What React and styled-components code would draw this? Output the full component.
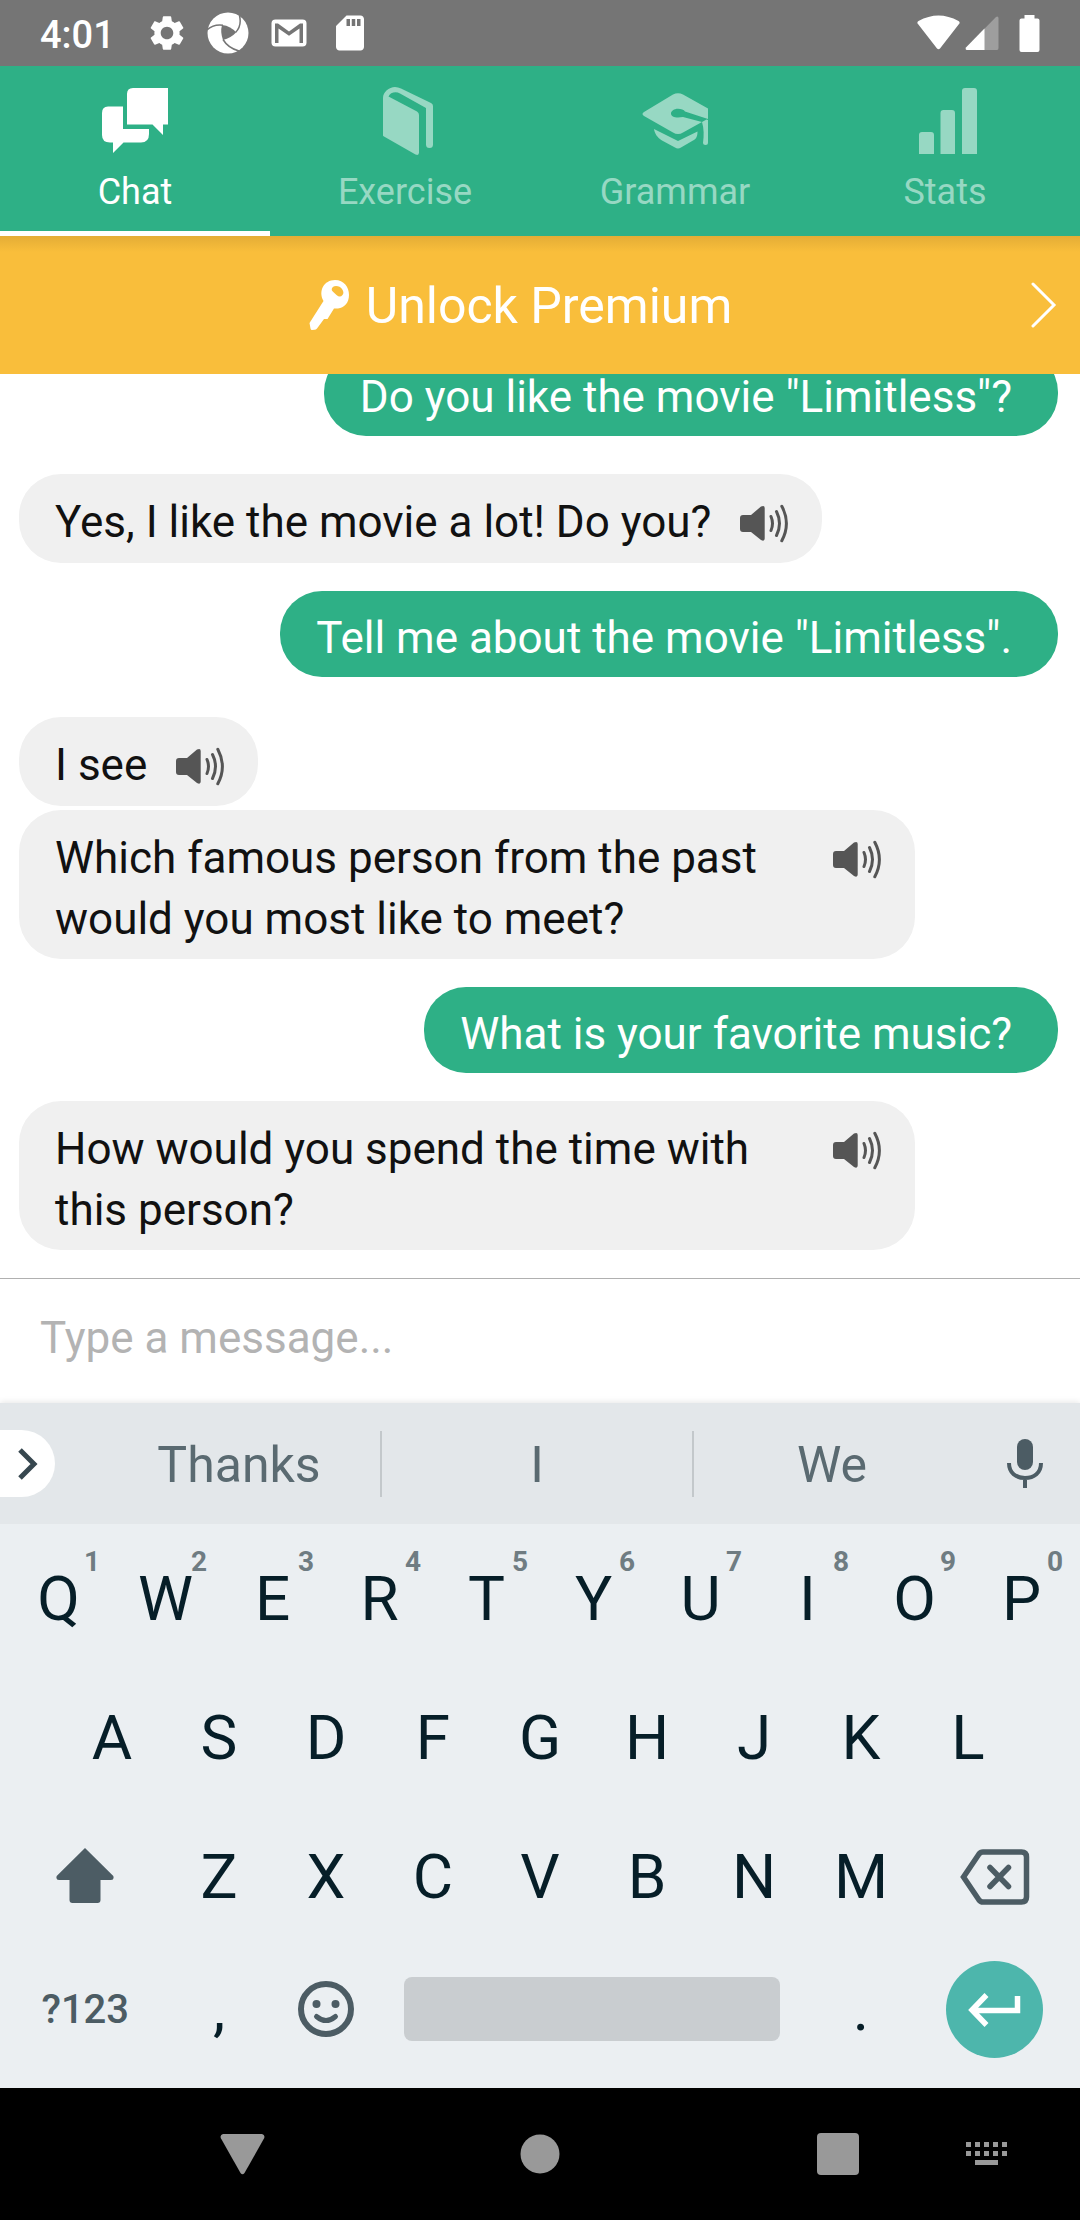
import React, { useState } from "react";
import styled, { createGlobalStyle } from "styled-components";
import { MdSettings, MdSdCard } from "react-icons/md";

const GlobalStyle = createGlobalStyle`
  * { box-sizing: border-box; }
  body { margin: 0; background: #fff; font-family: Roboto, "Noto Sans", sans-serif; }
  button, input { font: inherit; color: inherit; border: 0; background: none; padding: 0; margin: 0; }
  svg { display: block; flex: none; }
`;

const Screen = styled.div`
  display: flex;
  flex-direction: column;
  height: 100vh;
`;

const StatusBar = styled.header`
  flex: none;
  display: flex;
  align-items: center;
  justify-content: space-between;
  height: 66px;
  padding: 0 40px;
  background: #757575;
  color: #fff;
`;

const StatusGroup = styled.div`
  display: flex;
  align-items: center;
  gap: ${(p) => p.$gap}px;
`;

const Clock = styled.time`
  padding-top: 3px;
  margin-right: 12px;
  font-size: 38px;
  line-height: 48px;
  font-weight: 500;
`;

const TabBar = styled.nav`
  flex: none;
  display: grid;
  grid-template-columns: repeat(4, 1fr);
  height: 170px;
  background: #2eb086;
`;

const Tab = styled.button`
  display: flex;
  flex-direction: column;
  align-items: center;
  gap: 13px;
  padding-top: 21px;
  color: ${(p) => (p.$active ? "#fff" : "#97d8c3")};
  border-bottom: 5px solid ${(p) => (p.$active ? "#fff" : "transparent")};
  font-size: 36px;
  line-height: 44px;
`;

const Banner = styled.button`
  flex: none;
  display: flex;
  align-items: center;
  height: 138px;
  padding: 0 23px 0 10px;
  color: #fff;
  background: linear-gradient(#e4ad36, #f9be3b 16px);
`;

const BannerLabel = styled.span`
  flex: 1;
  display: flex;
  align-items: center;
  justify-content: center;
  gap: 16px;
  padding-top: 2px;
  font-size: 50px;
  line-height: 60px;
`;

const Messages = styled.main`
  flex: 1;
  min-height: 0;
  display: flex;
  flex-direction: column;
  justify-content: flex-end;
  padding: 0 22px 28px 19px;
  overflow: hidden;
`;

const Bubble = styled.div`
  flex: none;
  display: flex;
  align-items: flex-start;
  gap: 29px;
  max-width: 83vw;
  border-radius: 42px;
  font-size: 44px;
  line-height: 61px;
`;

const BotBubble = styled(Bubble)`
  align-self: flex-start;
  margin-top: ${(p) => p.$gap}px;
  padding: 18px 33px 9px 36px;
  background: #f0f0f0;
  color: #111;
`;

const UserBubble = styled(Bubble)`
  align-self: flex-end;
  margin-top: 28px;
  padding: 17px 46px 8px 36px;
  background: #2eb086;
  color: #fff;
`;

const BubbleText = styled.span`
  flex: 0 1 auto;
`;

const SpeakButton = styled.button`
  flex: none;
  margin: 12px 0 11px auto;
  color: #555;
`;

const Composer = styled.form`
  flex: none;
  display: flex;
  height: 125px;
  border-top: 1px solid #b0b0b0;
`;

const MessageInput = styled.input`
  flex: 1;
  min-width: 0;
  padding: 0 40px 6px;
  font-size: 44px;
  outline: none;
  &::placeholder { color: #b3b3b3; opacity: 1; }
`;

const Suggestions = styled.div`
  flex: none;
  display: grid;
  grid-template-columns: 98px 284fr 312fr 276fr 110px;
  align-items: center;
  height: 121px;
  background: #e3e7ea;
  color: #5a6a71;
  box-shadow: 0 -1px 6px rgba(0, 0, 0, 0.1);
`;

const ExpandButton = styled.button`
  display: flex;
  align-items: center;
  width: 55px;
  height: 67px;
  padding-left: 17px;
  border-radius: 0 34px 34px 0;
  background: #fff;
  color: #37474f;
`;

const Suggestion = styled.button`
  height: 66px;
  padding-top: 2px;
  border-right: ${(p) => (p.$last ? "0" : "2px solid #c3c8cb")};
  font-size: 50px;
  line-height: 64px;
`;

const MicButton = styled.button`
  justify-self: center;
  color: #4c5c64;
`;

const Keyboard = styled.section`
  flex: none;
  padding: 5px 5px 16px;
  background: #ebeff2;
  color: #061e28;
`;

const KeyRow = styled.div`
  display: flex;
  justify-content: center;
  height: ${(p) => p.$height}px;
`;

const Key = styled.button`
  position: relative;
  flex: 0 0 10%;
  font-size: 62px;
  line-height: 72px;
`;

const ActionKey = styled.button`
  flex: 1;
  display: flex;
  align-items: center;
  justify-content: center;
  color: #4c5c64;
  font-size: 40px;
  font-weight: 500;
`;

const EmojiKey = styled(ActionKey)`
  flex: 0 0 10%;
`;

const Hint = styled.span`
  position: absolute;
  top: 15px;
  right: 12px;
  font-size: 28px;
  line-height: 36px;
  font-weight: 700;
  color: #6f7c82;
`;

const SpaceKey = styled.button`
  flex: 0 0 40%;
  padding: 0 28px 0 24px;
  display: flex;
  align-items: center;
  &::before {
    content: "";
    flex: 1;
    height: 64px;
    border-radius: 8px;
    background: #c9cdd0;
  }
`;

const EnterDisc = styled.span`
  display: flex;
  align-items: center;
  justify-content: center;
  width: 97px;
  height: 97px;
  border-radius: 50%;
  background: #4db6ac;
`;

const NavBar = styled.footer`
  flex: none;
  display: grid;
  grid-template-columns: 94fr 297fr 298fr 74fr 149fr 149fr 19fr;
  align-items: center;
  height: 132px;
  background: #000;
  color: #999;
`;

const NavButton = styled.button`
  grid-column: ${(p) => p.$col};
  display: flex;
  justify-content: center;
`;

const ChatIcon = () => (
  <svg width="66" height="70" viewBox="0 -1 66 70" fill="currentColor">
    <path d="M31 0H66V36.500H61V47L50.500 36.500H25V6Q25 0 31 0Z" />
    <path d="M6 18.500H21V41H47V46Q47 54.500 39 54.500H21.500L11 65V54.500H8Q0 54.500 0 47V25Q0 18.500 6 18.500Z" />
  </svg>
);

const BookIcon = () => (
  <svg width="66" height="70" viewBox="0 0 66 70" fill="currentColor">
    <path d="M11 48.500V11C11 5 17 0 23 0C25 0 27 .5 29 1.500L59 16Q61 17 61 19V57.500A3.500 3.500 0 0 1 54 57.500V21L28 6.500C24 4 18 5.500 16.500 9.500L45 24.500Q47 25.500 47 28V65.500Q47 69 43.500 67.500L12 49.500Q11 49 11 48.500Z" />
  </svg>
);

const CapIcon = () => (
  <svg width="66" height="70" viewBox="0 0 66 70" fill="currentColor">
    <path d="M2 25L31 7.500Q36 5 41 7.500L66 21.500V32L43 24.500C42 22.500 39 21.700 36 21.700C32 21.700 29 24 29 26.400C29 29 32 30.500 36 30.500L41 30L60 35L41 45.500Q36 48.500 31 45.500L2 29Q-1 27 2 25Z" />
    <path d="M60 35L64.500 32.500L66 33V55.500Q66 58 63.500 58Q61 58 61 56C62 48 62 42 60 35Z" />
    <path d="M12 42L36 54L55.500 44.500C55.500 50 54 52 51 53.500L39 60.500Q36 62.500 33 60.500L20 53.500C15 50.500 12.500 46 12 42Z" />
  </svg>
);

const StatsIcon = () => (
  <svg width="66" height="70" viewBox="0 0 66 70" fill="currentColor">
    <path d="M7 67V48Q7 45 10 45H19Q22 45 22 48V67ZM28.500 67V26Q28.500 23 31.500 23H40Q43 23 43 26V67ZM50 67V4Q50 1 53 1H62Q65 1 65 4V67Z" />
  </svg>
);

const ShutterIcon = () => (
  <svg width="42" height="42" viewBox="0 0 42 42">
    <circle cx="21" cy="21" r="20.500" fill="#fff" />
    <path d="M15 13Q24 14 29 20.500Q24 26 16 28Q13 20 15 13Z" fill="#757575" />
    <path d="M0 18Q6 12 16 13.200M28.500 20.500Q35 14 32.500 3.500M16 27.500Q21 36 32 39" fill="none" stroke="#757575" strokeWidth="1.500" />
  </svg>
);

const MailIcon = () => (
  <svg width="42" height="42" viewBox="-3 -7 42 42">
    <rect x=".5" y=".5" width="35" height="27" rx="4" fill="#fff" />
    <path d="M4 24V4.500H7L18 12.500L29 4.500H32V24H28.500V9.500L18 16.800L7.500 9.500V24Z" fill="#757575" />
  </svg>
);

const WifiIcon = () => (
  <svg width="43" height="36" viewBox="0 0 43 36" fill="#fff">
    <path d="M1 9Q-.5 7.500 1.500 6Q21.500 -5 41.500 6Q43.500 7.500 42 9L23 33.500Q21.500 35 20 33.500Z" />
  </svg>
);

const SignalIcon = () => (
  <svg width="34" height="36" viewBox="0 0 34 36">
    <path d="M33.500 33V3Q33 .5 31 2L1 32.500Q0 34.500 2 35H32Q33.500 35 33.500 33Z" fill="#9e9e9e" />
    <path d="M19.500 13.500V35H2Q0 34.500 1 32.500Z" fill="#fff" />
  </svg>
);

const BatteryIcon = () => (
  <svg width="21" height="37" viewBox="0 0 21 37" fill="#fff">
    <path d="M5.500 0H15.500V3.500H18.500Q20.500 3.500 20.500 5.500V35Q20.500 37 18.500 37H2.500Q.5 37 .5 35V5.500Q.5 3.500 2.500 3.500H5.500Z" />
  </svg>
);

const KeyIcon = () => (
  <svg width="41" height="52" viewBox="0 0 41 52" fill="#fff" fillRule="evenodd">
    <path d="M.5 43L14.500 21C9 11 15 0 26 0C35 0 40 7 40 15C40 23 35 28 29 28.500H25L18.500 39H15L8 48.500Q7 49.800 5.500 49.800L3 50Q1.800 50 1.500 48.500ZM22.700 9Q23.500 6 27 6Q31 6 33 9Q35.500 12.500 33.500 15Q31 18 27.500 15L24 11.800Q22.500 10.500 22.700 9Z" />
  </svg>
);

const SpeakerIcon = () => (
  <svg width="49" height="39" viewBox="0 0 49 39" fill="none" stroke="currentColor" strokeLinecap="round">
    <path d="M3 11H11L21 2.500Q24.700 .8 24.700 4V34.500Q24.700 37.800 21 36L11 28H3Q0 28 0 25V14Q0 11 3 11Z" fill="currentColor" stroke="none" />
    <path d="M31 12.500Q34 19.500 31 26.500M36.500 7.500Q42.500 19.500 36.500 31.500M41.800 2.200Q51 19.500 41.800 36.800" strokeWidth="3" />
  </svg>
);

const LinesIcon = ({ w, h, d, stroke = 3, cap = "round" }) => (
  <svg width={w} height={h} viewBox={`0 0 ${w} ${h}`} fill="none" stroke="currentColor" strokeWidth={stroke} strokeLinecap={cap}>
    <path d={d} />
  </svg>
);

const MicIcon = () => (
  <svg width="38" height="50" viewBox="0 0 38 50">
    <rect x="11" y="0" width="16" height="31" rx="8" fill="currentColor" />
    <path d="M3 24C3 34 10 39 19 39C28 39 35 34 35 24M19 39V49" fill="none" stroke="currentColor" strokeWidth="4" />
  </svg>
);

const ShiftIcon = () => (
  <svg width="58" height="58" viewBox="0 2 58 58" fill="currentColor">
    <path d="M29 2L57.300 30Q58.500 34 55 34H44.500V54Q44.500 57 41.500 57H16.500Q13.500 57 13.500 54V34H3Q-.5 34 .7 30Z" />
  </svg>
);

const DeleteIcon = () => (
  <svg width="70" height="56" viewBox="0 0 70 56" fill="none" stroke="currentColor">
    <path d="M3.500 28L19 5Q20.500 3 23 3H61.500Q66.500 3 66.500 8V48Q66.500 53 61.500 53H23Q20.500 53 19 51Z" strokeWidth="5.500" />
    <path d="M30 18.500L48.500 37.500M48.500 18.500L30 37.500" strokeWidth="5.500" strokeLinecap="round" />
  </svg>
);

const SmileIcon = () => (
  <svg width="56" height="56" viewBox="0 0 56 56">
    <circle cx="28" cy="28" r="25" fill="none" stroke="currentColor" strokeWidth="6" />
    <circle cx="18.500" cy="23" r="4" fill="currentColor" />
    <circle cx="37.500" cy="23" r="4" fill="currentColor" />
    <path d="M18.500 35.500Q28 43.500 37.500 35.500" fill="none" stroke="currentColor" strokeWidth="5" strokeLinecap="round" />
  </svg>
);

const EnterIcon = () => (
  <svg width="54" height="42" viewBox="0 -4 54 42" fill="none" stroke="#fff" strokeWidth="5.500">
    <path d="M18.500 3L4 18L18.500 33M4 18.500H49.500V4" />
  </svg>
);

const KeyboardIcon = () => (
  <svg width="42" height="24" viewBox="0 0 42 24" fill="currentColor">
    {[0, 9, 18, 27, 36].map((x) => (
      <path key={x} d={`M${x} 0h5v5h-5zM${x} 9h5v5h-5z`} />
    ))}
    <rect x="9" y="18" width="23" height="5" />
  </svg>
);

const TABS = [
  ["Chat", ChatIcon],
  ["Exercise", BookIcon],
  ["Grammar", CapIcon],
  ["Stats", StatsIcon],
];

const MESSAGES = [
  { user: true, text: 'Do you like the movie "Limitless"?' },
  { text: "Yes, I like the movie a lot! Do you?", gap: 38 },
  { user: true, text: 'Tell me about the movie "Limitless".' },
  { text: "I see", gap: 40 },
  { text: "Which famous person from the past would you most like to meet?", gap: 4 },
  { user: true, text: "What is your favorite music?" },
  { text: "How would you spend the time with this person?", gap: 28 },
];

export default function App() {
  const [active, setActive] = useState("Chat");
  const [draft, setDraft] = useState("");
  const type = (s) => setDraft((d) => d + s);

  return (
    <Screen>
      <GlobalStyle />
      <StatusBar>
        <StatusGroup $gap={19}>
          <Clock>4:01</Clock>
          <MdSettings size={42} />
          <ShutterIcon />
          <MailIcon />
          <MdSdCard size={42} />
        </StatusGroup>
        <StatusGroup $gap={20}>
          <StatusGroup $gap={5}>
            <WifiIcon />
            <SignalIcon />
          </StatusGroup>
          <BatteryIcon />
        </StatusGroup>
      </StatusBar>

      <TabBar>
        {TABS.map(([name, Icon]) => (
          <Tab key={name} type="button" $active={name === active} onClick={() => setActive(name)}>
            <Icon />
            {name}
          </Tab>
        ))}
      </TabBar>

      <Banner type="button">
        <BannerLabel>
          <KeyIcon />
          Unlock Premium
        </BannerLabel>
        <LinesIcon w={26} h={46} d="M2 2L23 23L2 44" />
      </Banner>

      <Messages>
        {MESSAGES.map(({ user, text, gap }) =>
          user ? (
            <UserBubble key={text}>
              <BubbleText>{text}</BubbleText>
            </UserBubble>
          ) : (
            <BotBubble key={text} $gap={gap}>
              <BubbleText>{text}</BubbleText>
              <SpeakButton type="button" aria-label="Listen">
                <SpeakerIcon />
              </SpeakButton>
            </BotBubble>
          )
        )}
      </Messages>

      <Composer onSubmit={(e) => e.preventDefault()}>
        <MessageInput
          aria-label="Message"
          placeholder="Type a message..."
          value={draft}
          onChange={(e) => setDraft(e.target.value)}
        />
      </Composer>

      <Suggestions>
        <ExpandButton type="button" aria-label="More">
          <LinesIcon w={24} h={36} d="M3 4L17 18L3 32" stroke={5} cap="butt" />
        </ExpandButton>
        {["Thanks", "I", "We"].map((word) => (
          <Suggestion key={word} type="button" $last={word === "We"} onClick={() => type(word + " ")}>
            {word}
          </Suggestion>
        ))}
        <MicButton type="button" aria-label="Voice input">
          <MicIcon />
        </MicButton>
      </Suggestions>

      <Keyboard>
        <KeyRow $height={139}>
          {[..."QWERTYUIOP"].map((k, i) => (
            <Key key={k} type="button" onClick={() => type(k)}>
              {k}
              <Hint>{(i + 1) % 10}</Hint>
            </Key>
          ))}
        </KeyRow>
        <KeyRow $height={139}>
          {[..."ASDFGHJKL"].map((k) => (
            <Key key={k} type="button" onClick={() => type(k)}>{k}</Key>
          ))}
        </KeyRow>
        <KeyRow $height={139}>
          <ActionKey type="button" aria-label="Shift"><ShiftIcon /></ActionKey>
          {[..."ZXCVBNM"].map((k) => (
            <Key key={k} type="button" onClick={() => type(k)}>{k}</Key>
          ))}
          <ActionKey type="button" aria-label="Delete" onClick={() => setDraft((d) => d.slice(0, -1))}>
            <DeleteIcon />
          </ActionKey>
        </KeyRow>
        <KeyRow $height={126}>
          <ActionKey type="button">?123</ActionKey>
          <Key type="button" onClick={() => type(",")}>,</Key>
          <EmojiKey type="button" aria-label="Emoji"><SmileIcon /></EmojiKey>
          <SpaceKey type="button" aria-label="Space" onClick={() => type(" ")} />
          <Key type="button" onClick={() => type(".")}>.</Key>
          <ActionKey type="button" aria-label="Enter">
            <EnterDisc><EnterIcon /></EnterDisc>
          </ActionKey>
        </KeyRow>
      </Keyboard>

      <NavBar>
        <NavButton type="button" aria-label="Back" $col={2}>
          <svg width="45" height="41" viewBox="0 0 45 41" fill="currentColor">
            <path d="M3 0H42Q45.500 1 44 4.500L24.500 39Q22.500 41.500 20.500 39L1 4.500Q-.5 1 3 0Z" />
          </svg>
        </NavButton>
        <NavButton type="button" aria-label="Home" $col={3}>
          <svg width="40" height="40" viewBox="0 0 40 40" fill="currentColor"><circle cx="20" cy="20" r="19.500" /></svg>
        </NavButton>
        <NavButton type="button" aria-label="Recent apps" $col={5}>
          <svg width="42" height="42" viewBox="0 0 42 42" fill="currentColor"><rect width="42" height="42" rx="4" /></svg>
        </NavButton>
        <NavButton type="button" aria-label="Switch keyboard" $col={6}>
          <KeyboardIcon />
        </NavButton>
      </NavBar>
    </Screen>
  );
}
